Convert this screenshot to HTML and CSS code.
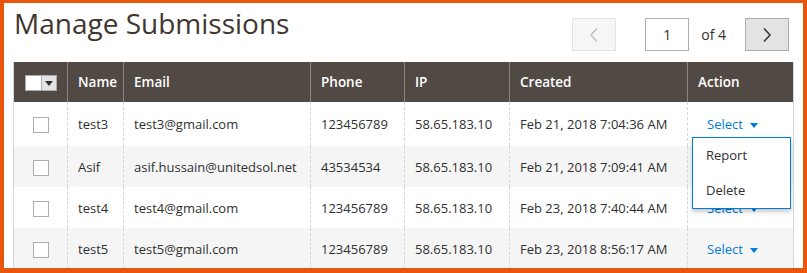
FILE: index.html
```html
<!DOCTYPE html>
<html lang="en">
<head>
    <meta charset="UTF-8">
    <title>Manage Submissions</title>
    <link rel="stylesheet" href="styles.css">
</head>
<body>
    <div class="frame">
        <div class="page-head">
            <h1 class="page-title">Manage Submissions</h1>
            <div class="pager">
                <button class="pager-btn pager-prev" disabled>
                    <svg width="10" height="16" viewBox="0 0 10 16"><path d="M8 1.5 L2 8 L8 14.5" fill="none" stroke="currentColor" stroke-width="1.6"/></svg>
                </button>
                <input class="pager-input" type="text" value="1">
                <span class="pager-total">of 4</span>
                <button class="pager-btn pager-next">
                    <svg width="10" height="16" viewBox="0 0 10 16"><path d="M2 1.5 L8 8 L2 14.5" fill="none" stroke="currentColor" stroke-width="1.6"/></svg>
                </button>
            </div>
        </div>

        <table class="grid">
            <colgroup>
                <col style="width: 54px">
                <col style="width: 56px">
                <col style="width: 187px">
                <col style="width: 94px">
                <col style="width: 105px">
                <col style="width: 178px">
                <col style="width: 106px">
            </colgroup>
            <thead>
                <tr>
                    <th class="col-check">
                        <span class="multi-check"><span class="multi-box"></span><span class="multi-arrow"></span></span>
                    </th>
                    <th>Name</th>
                    <th>Email</th>
                    <th>Phone</th>
                    <th>IP</th>
                    <th>Created</th>
                    <th>Action</th>
                </tr>
            </thead>
            <tbody>
                <tr>
                    <td class="col-check"><span class="check"></span></td>
                    <td>test3</td>
                    <td>test3@gmail.com</td>
                    <td>123456789</td>
                    <td>58.65.183.10</td>
                    <td>Feb 21, 2018 7:04:36 AM</td>
                    <td class="col-action">
                        <a class="action-select">Select<span class="caret"></span></a>
                        <ul class="action-menu">
                            <li>Report</li>
                            <li>Delete</li>
                        </ul>
                    </td>
                </tr>
                <tr>
                    <td class="col-check"><span class="check"></span></td>
                    <td>Asif</td>
                    <td>asif.hussain@unitedsol.net</td>
                    <td>43534534</td>
                    <td>58.65.183.10</td>
                    <td>Feb 21, 2018 7:09:41 AM</td>
                    <td class="col-action"><a class="action-select is-covered">Select<span class="caret"></span></a></td>
                </tr>
                <tr>
                    <td class="col-check"><span class="check"></span></td>
                    <td>test4</td>
                    <td>test4@gmail.com</td>
                    <td>123456789</td>
                    <td>58.65.183.10</td>
                    <td>Feb 23, 2018 7:40:44 AM</td>
                    <td class="col-action"><a class="action-select">Select<span class="caret"></span></a></td>
                </tr>
                <tr>
                    <td class="col-check"><span class="check"></span></td>
                    <td>test5</td>
                    <td>test5@gmail.com</td>
                    <td>123456789</td>
                    <td>58.65.183.10</td>
                    <td>Feb 23, 2018 8:56:17 AM</td>
                    <td class="col-action"><a class="action-select">Select<span class="caret"></span></a></td>
                </tr>
            </tbody>
        </table>
    </div>
</body>
</html>
```

FILE: styles.css
```css
* { box-sizing: border-box; }
body {
    margin: 0;
    font-family: "Open Sans", "Liberation Sans", Arial, sans-serif;
    color: #303030;
    background: #fff;
}
.frame {
    height: 273px;
    overflow: hidden;
    border: 4px solid #e8560b;
    border-top-width: 3px;
    border-bottom-width: 5px;
    padding: 0 10px 0 9px;
}
.page-head {
    display: flex;
    justify-content: space-between;
    align-items: flex-start;
    height: 59px;
}
.page-title {
    margin: 4px 0 0 1px;
    font-size: 28px;
    font-weight: 400;
    line-height: 1.2;
    color: #41362f;
}
.pager {
    display: flex;
    align-items: center;
    margin-top: 15px;
    margin-right: 4px;
}
.pager-btn {
    width: 44px;
    height: 33px;
    padding: 0;
    display: flex;
    align-items: center;
    justify-content: center;
    border: 1px solid #adadad;
    background: #e3e3e3;
    color: #41362f;
}
.pager-prev {
    background: #f6f6f6;
    border-color: #e3e3e3;
    color: #c2c2c2;
}
.pager-input {
    width: 44px;
    height: 33px;
    margin-left: 29px;
    border: 1px solid #adadad;
    text-align: center;
    font-family: inherit;
    font-size: 14px;
    color: #303030;
}
.pager-total {
    margin: 0 19px 0 12px;
    font-size: 14px;
    color: #303030;
}

.grid {
    width: 780px;
    table-layout: fixed;
    border-collapse: collapse;
    border-left: 1px solid #d6d6d6;
    border-right: 1px solid #d6d6d6;
    font-size: 13px;
}
.grid th {
    height: 40px;
    padding: 0 10px;
    background: #514943;
    color: #fff;
    font-size: 13.5px;
    font-weight: 600;
    text-align: left;
    border-left: 1px solid #8a837f;
}
.grid th:first-child { border-left: none; }
.grid td {
    height: 41px;
    padding: 0 10px;
    border-left: 1px dashed #d6d6d6;
    white-space: nowrap;
    vertical-align: middle;
}
.grid td:first-child { border-left: none; }
.grid tbody tr:first-child td { height: 44px; }
.grid tbody tr:nth-child(even) td { background: #f5f5f5; }
.grid .col-check {
    text-align: center;
    padding: 0;
}

.check {
    display: inline-block;
    width: 16px;
    height: 16px;
    border: 1px solid #adadad;
    background: #fff;
    vertical-align: middle;
}
.multi-check {
    display: inline-flex;
    height: 16px;
    border: 1px solid #adadad;
    vertical-align: middle;
}
.multi-box {
    width: 15px;
    background: #fff;
}
.multi-arrow {
    width: 15px;
    background: #e3e3e3;
    border-left: 1px solid #adadad;
    display: flex;
    align-items: center;
    justify-content: center;
}
.multi-arrow::after {
    content: "";
    border-left: 4px solid transparent;
    border-right: 4px solid transparent;
    border-top: 5px solid #303030;
}

.col-action { position: relative; }
.action-select {
    margin-left: 9px;
    color: #007bdb;
    cursor: pointer;
}
.action-select.is-covered { visibility: hidden; }
.caret {
    display: inline-block;
    margin-left: 7px;
    border-left: 4px solid transparent;
    border-right: 4px solid transparent;
    border-top: 5px solid #007bdb;
    vertical-align: middle;
}
.action-menu {
    position: absolute;
    top: 35px;
    left: 4px;
    width: 99px;
    margin: 0;
    padding: 0;
    list-style: none;
    background: #fff;
    border: 1px solid #007bdb;
    box-shadow: 0 3px 4px rgba(0,0,0,0.2);
    z-index: 2;
}
.action-menu li {
    height: 35px;
    line-height: 35px;
    padding: 0 13px;
    color: #303030;
}
```
